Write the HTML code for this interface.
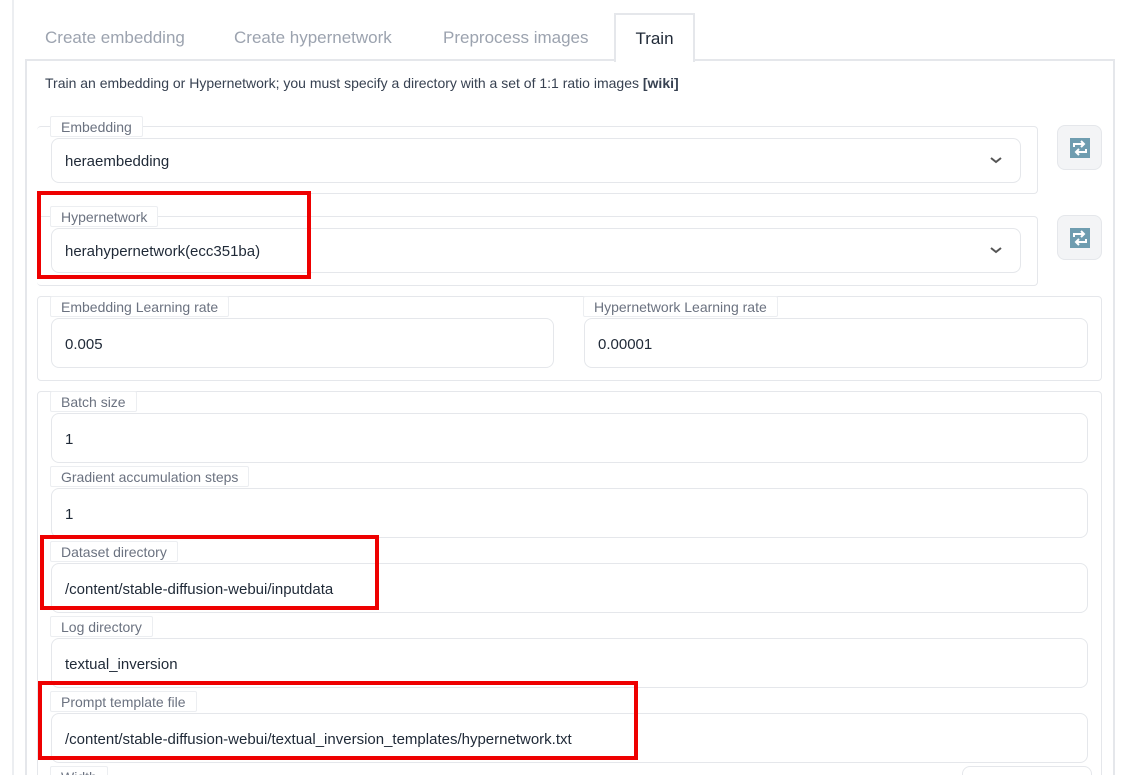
<!DOCTYPE html>
<html><head><meta charset="utf-8"><style>
*{box-sizing:border-box;margin:0;padding:0}
html,body{width:1122px;height:775px;overflow:hidden}
body{background:#fff;font-family:"Liberation Sans",sans-serif;position:relative;color:#1f2937}
.a{position:absolute}
.tab{position:absolute;top:28px;font-size:17px;color:#9ca3af}
.grp{position:absolute;border:1px solid #e5e7eb;border-radius:4px}
.lbl{position:absolute;height:21px;padding:0 10px;font-size:14px;line-height:21px;color:#6b7280;background:#fff;border:1px solid #eceef1;border-radius:2px}
.inp{position:absolute;border:1px solid #e5e7eb;border-radius:8px;background:#fff;font-size:15px;line-height:20px;padding:3px 13px 0;display:flex;align-items:center;color:#1f2937}
.red{position:absolute;border:4px solid #ee0000}
.btn{position:absolute;width:45px;height:45px;border:1px solid #e5e7eb;border-radius:8px;background:#f3f4f6;display:flex;align-items:center;justify-content:center}
.chev{position:absolute;right:18px;top:16px}
</style></head><body>
<div class="a" style="left:12px;top:0;width:2px;height:775px;background:#eceef1"></div>
<div class="tab" style="left:45px">Create embedding</div>
<div class="tab" style="left:234px">Create hypernetwork</div>
<div class="tab" style="left:443px">Preprocess images</div>
<div class="a" style="left:25px;top:59px;width:1090px;height:720px;border:2px solid #e5e7eb;border-bottom:none"></div>
<div class="a" style="left:614px;top:13px;width:81px;height:49px;border:2px solid #e5e7eb;border-bottom:none;background:#fff;font-size:17px;color:#1f2937;text-align:center;line-height:48px">Train</div>
<div class="a" style="left:45px;top:75px;font-size:14px;color:#374151">Train an embedding or Hypernetwork; you must specify a directory with a set of 1:1 ratio images <b>[wiki]</b></div>

<div class="grp" style="left:37px;top:126px;width:1001px;height:68px;border-left:none"></div>
<div class="lbl" style="left:50px;top:116px">Embedding</div>
<div class="inp" style="left:51px;top:138px;width:970px;height:45px">heraembedding<svg class="chev" width="12" height="10" viewBox="0 0 12 10"><path d="M1 3l5 4 5-4" fill="none" stroke="#555" stroke-width="2"/></svg></div>
<div class="btn" style="left:1057px;top:125px"><svg width="20" height="20" viewBox="0 0 20 20"><rect width="20" height="20" fill="#6f9db0"/><path d="M4 9V6h10M11 3l3 3-3 3M16 11v3H6M9 17l-3-3 3-3" fill="none" stroke="#fff" stroke-width="2"/></svg></div>

<div class="grp" style="left:37px;top:216px;width:1001px;height:70px;border-left:none"></div>
<div class="lbl" style="left:50px;top:206px">Hypernetwork</div>
<div class="inp" style="left:51px;top:228px;width:970px;height:45px">herahypernetwork(ecc351ba)<svg class="chev" width="12" height="10" viewBox="0 0 12 10"><path d="M1 3l5 4 5-4" fill="none" stroke="#555" stroke-width="2"/></svg></div>
<div class="btn" style="left:1057px;top:215px"><svg width="20" height="20" viewBox="0 0 20 20"><rect width="20" height="20" fill="#6f9db0"/><path d="M4 9V6h10M11 3l3 3-3 3M16 11v3H6M9 17l-3-3 3-3" fill="none" stroke="#fff" stroke-width="2"/></svg></div>

<div class="grp" style="left:37px;top:296px;width:1065px;height:85px"></div>
<div class="lbl" style="left:50px;top:296px">Embedding Learning rate</div>
<div class="lbl" style="left:583px;top:296px">Hypernetwork Learning rate</div>
<div class="inp" style="left:51px;top:318px;width:503px;height:50px">0.005</div>
<div class="inp" style="left:584px;top:318px;width:504px;height:50px">0.00001</div>

<div class="grp" style="left:37px;top:391px;width:1065px;height:400px"></div>
<div class="lbl" style="left:50px;top:391px">Batch size</div>
<div class="inp" style="left:51px;top:413px;width:1037px;height:50px">1</div>
<div class="lbl" style="left:50px;top:466px">Gradient accumulation steps</div>
<div class="inp" style="left:51px;top:488px;width:1037px;height:50px">1</div>
<div class="lbl" style="left:50px;top:541px">Dataset directory</div>
<div class="inp" style="left:51px;top:563px;width:1037px;height:50px">/content/stable-diffusion-webui/inputdata</div>
<div class="lbl" style="left:50px;top:616px">Log directory</div>
<div class="inp" style="left:51px;top:638px;width:1037px;height:50px">textual_inversion</div>
<div class="lbl" style="left:50px;top:691px">Prompt template file</div>
<div class="inp" style="left:51px;top:713px;width:1037px;height:50px">/content/stable-diffusion-webui/textual_inversion_templates/hypernetwork.txt</div>
<div class="lbl" style="left:50px;top:766px">Width</div>
<div class="a" style="left:962px;top:766px;width:130px;height:20px;border:1px solid #e5e7eb;border-radius:8px"></div>

<div class="red" style="left:37px;top:191px;width:274px;height:88px"></div>
<div class="red" style="left:40px;top:535px;width:339px;height:75px"></div>
<div class="red" style="left:38px;top:681px;width:600px;height:79px"></div>
</body></html>
